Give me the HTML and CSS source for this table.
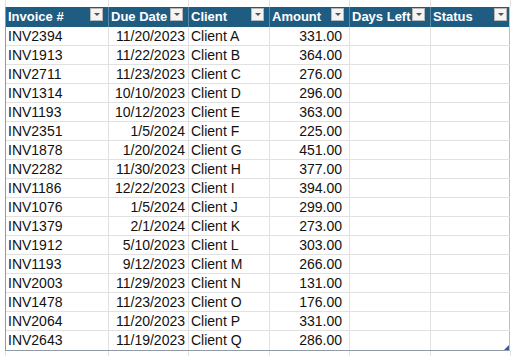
FILE: index.html
```html
<!DOCTYPE html>
<html>
<head>
<meta charset="utf-8">
<link rel="stylesheet" href="styles.css">
</head>
<body>
<div class="sheet">
  <div class="grid gap-top">
    <div class="gcell"></div><div class="gcell"></div><div class="gcell"></div><div class="gcell"></div><div class="gcell"></div><div class="gcell last"></div>
  </div>
  <div class="table">
    <div class="grid head">
      <div class="hcell">Invoice #<span class="dd"></span></div>
      <div class="hcell">Due Date<span class="dd"></span></div>
      <div class="hcell">Client<span class="dd"></span></div>
      <div class="hcell">Amount<span class="dd"></span></div>
      <div class="hcell clip">Days Left<span class="dd"></span></div>
      <div class="hcell end">Status<span class="dd"></span></div>
    </div>
    <div class="grid row"><div class="c">INV2394</div><div class="c r">11/20/2023</div><div class="c">Client A</div><div class="c amt">331.00</div><div class="c"></div><div class="c end"></div></div>
    <div class="grid row"><div class="c">INV1913</div><div class="c r">11/22/2023</div><div class="c">Client B</div><div class="c amt">364.00</div><div class="c"></div><div class="c end"></div></div>
    <div class="grid row"><div class="c">INV2711</div><div class="c r">11/23/2023</div><div class="c">Client C</div><div class="c amt">276.00</div><div class="c"></div><div class="c end"></div></div>
    <div class="grid row"><div class="c">INV1314</div><div class="c r">10/10/2023</div><div class="c">Client D</div><div class="c amt">296.00</div><div class="c"></div><div class="c end"></div></div>
    <div class="grid row"><div class="c">INV1193</div><div class="c r">10/12/2023</div><div class="c">Client E</div><div class="c amt">363.00</div><div class="c"></div><div class="c end"></div></div>
    <div class="grid row"><div class="c">INV2351</div><div class="c r">1/5/2024</div><div class="c">Client F</div><div class="c amt">225.00</div><div class="c"></div><div class="c end"></div></div>
    <div class="grid row"><div class="c">INV1878</div><div class="c r">1/20/2024</div><div class="c">Client G</div><div class="c amt">451.00</div><div class="c"></div><div class="c end"></div></div>
    <div class="grid row"><div class="c">INV2282</div><div class="c r">11/30/2023</div><div class="c">Client H</div><div class="c amt">377.00</div><div class="c"></div><div class="c end"></div></div>
    <div class="grid row"><div class="c">INV1186</div><div class="c r">12/22/2023</div><div class="c">Client I</div><div class="c amt">394.00</div><div class="c"></div><div class="c end"></div></div>
    <div class="grid row"><div class="c">INV1076</div><div class="c r">1/5/2024</div><div class="c">Client J</div><div class="c amt">299.00</div><div class="c"></div><div class="c end"></div></div>
    <div class="grid row"><div class="c">INV1379</div><div class="c r">2/1/2024</div><div class="c">Client K</div><div class="c amt">273.00</div><div class="c"></div><div class="c end"></div></div>
    <div class="grid row"><div class="c">INV1912</div><div class="c r">5/10/2023</div><div class="c">Client L</div><div class="c amt">303.00</div><div class="c"></div><div class="c end"></div></div>
    <div class="grid row"><div class="c">INV1193</div><div class="c r">9/12/2023</div><div class="c">Client M</div><div class="c amt">266.00</div><div class="c"></div><div class="c end"></div></div>
    <div class="grid row"><div class="c">INV2003</div><div class="c r">11/29/2023</div><div class="c">Client N</div><div class="c amt">131.00</div><div class="c"></div><div class="c end"></div></div>
    <div class="grid row"><div class="c">INV1478</div><div class="c r">11/23/2023</div><div class="c">Client O</div><div class="c amt">176.00</div><div class="c"></div><div class="c end"></div></div>
    <div class="grid row"><div class="c">INV2064</div><div class="c r">11/20/2023</div><div class="c">Client P</div><div class="c amt">331.00</div><div class="c"></div><div class="c end"></div></div>
    <div class="grid row"><div class="c">INV2643</div><div class="c r">11/19/2023</div><div class="c">Client Q</div><div class="c amt">286.00</div><div class="c"></div><div class="c end"></div></div>
    <svg class="handle" width="5" height="5" viewBox="0 0 5 5"><polygon points="5,0 5,5 0,5" fill="#2b5fae"/></svg>
  </div>
  <div class="grid gap-bottom">
    <div class="gcell"></div><div class="gcell"></div><div class="gcell"></div><div class="gcell"></div><div class="gcell"></div><div class="gcell last"></div>
  </div>
</div>
</body>
</html>
```

FILE: styles.css
```css
* { box-sizing: border-box; }
html, body { margin: 0; padding: 0; background: #ffffff; }
body {
  font-family: "Liberation Sans", Arial, sans-serif;
  color: #111111;
  width: 512px;
  height: 356px;
  overflow: hidden;
}
.sheet {
  width: 512px;
  height: 356px;
  padding-left: 5px;
}
.grid {
  display: grid;
  grid-template-columns: 103px 80px 81px 80px 81px 79px;
}
.gap-top, .gap-bottom {
  grid-template-columns: 103px 80px 81px 80px 81px 80px;
  border-left: 1px solid #e2e2e2;
}
.gap-top { height: 7px; }
.gap-bottom { height: 8px; }
.gcell { border-right: 1px solid #e2e2e2; }
.table {
  position: relative;
  width: 505px;
  border-left: 1px solid #8f9aa5;
  border-right: 1px solid #b9c0c7;
  border-bottom: 1px solid #8f9aa5;
}
.head {
  height: 20px;
  background: #1f5c82;
}
.hcell {
  position: relative;
  color: #ffffff;
  font-weight: bold;
  font-size: 13px;
  line-height: 20px;
  padding-left: 2px;
  white-space: nowrap;
  overflow: hidden;
  border-right: 1px solid #5f88a2;
}
.hcell.end { border-right: none; }
.dd {
  position: absolute;
  top: 1px;
  right: 5px;
  width: 13px;
  height: 13px;
  background: #f4f4f4;
  border: 1px solid #b8b8b8;
}
.hcell.end .dd { right: 3px; }
.dd::after {
  content: "";
  position: absolute;
  left: 3px;
  top: 4px;
  border-left: 3px solid transparent;
  border-right: 3px solid transparent;
  border-top: 3px solid #555555;
}
.row { height: 19px; }
.c {
  font-size: 14px;
  line-height: 18px;
  padding: 0 3px 0 2px;
  white-space: nowrap;
  overflow: hidden;
  border-right: 1px solid #e1e1e1;
  border-bottom: 1px solid #e1e1e1;
}
.row:last-of-type .c { border-bottom: none; }
.c.end { border-right: none; }
.c.r { text-align: right; padding-right: 3px; }
.c.amt { text-align: right; padding-right: 7px; }
.handle {
  position: absolute;
  right: 0;
  bottom: 0;
  display: block;
}
```
